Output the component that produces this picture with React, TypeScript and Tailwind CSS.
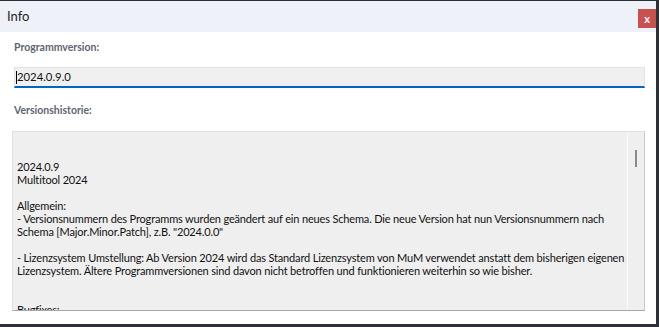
import React from "react";

const lines: string[] = [
  "2024.0.9",
  "Multitool 2024",
  "",
  "Allgemein:",
  "- Versionsnummern des Programms wurden geändert auf ein neues Schema. Die neue Version hat nun Versionsnummern nach",
  'Schema [Major.Minor.Patch], z.B. "2024.0.0"',
  "",
  "- Lizenzsystem Umstellung: Ab Version 2024 wird das Standard Lizenzsystem von MuM verwendet anstatt dem bisherigen eigenen",
  "Lizenzsystem. Ältere Programmversionen sind davon nicht betroffen und funktionieren weiterhin so wie bisher.",
  "",
  "",
  "Bugfixes:",
];

export default function App() {
  return (
    <div className="w-[659px] h-[327px] bg-[#2e3037] overflow-hidden pt-[1px] font-['Lato',sans-serif]">
      <div className="w-[656px] h-[323px] bg-white flex flex-col">
        {/* Title bar */}
        <div className="h-[31px] bg-[#eef1f8] flex items-start justify-between shrink-0">
          <div className="pl-[7px] pt-[6px] text-[13px] leading-[18px] text-[#1e1e1e]">Info</div>
          <div className="mt-[8px] w-[18px] h-[19px] bg-[#c8504e] flex items-center justify-center text-white text-[11px] font-bold leading-none">
            x
          </div>
        </div>

        {/* Content */}
        <div className="flex flex-col pl-[14px] pr-[11px]">
          <div className="mt-[8px] text-[10.5px] leading-[15px] font-bold text-[#5f6671]">Programmversion:</div>
          <div className="mt-[12px] h-[21px] bg-[#f0f0f0] border border-[#e2e2e2] border-b-2 border-b-[#0067c0] flex items-center">
            <div className="relative pl-[2px] text-[11.3px] leading-[16px] text-[#111111]">
              <span className="absolute left-[1px] top-[2px] w-[1px] h-[13px] bg-black" />
              2024.0.9.0
            </div>
          </div>
          <div className="mt-[15px] text-[10.5px] leading-[15px] font-bold text-[#5f6671]">Versionshistorie:</div>
          <div className="mt-[13px] -ml-[2px] h-[180px] bg-[#efefef] border border-[#e0e0e0] border-b-[#a9a9a9] border-r-[#c8c8c8] flex overflow-hidden">
            <div className="flex-1 overflow-hidden pt-[28px] pl-[4px] text-[11px] tracking-[-0.16px] leading-[13px] text-[#111111] whitespace-nowrap">
              {lines.map((l, i) => (
                <div key={i} className="h-[13px]">
                  {l}
                </div>
              ))}
            </div>
            <div className="w-[17px] border-l border-[#fafafa] flex justify-center shrink-0">
              <div className="mt-[18px] w-[2px] h-[17px] bg-[#8a8a8a]" />
            </div>
          </div>
        </div>
      </div>
    </div>
  );
}
